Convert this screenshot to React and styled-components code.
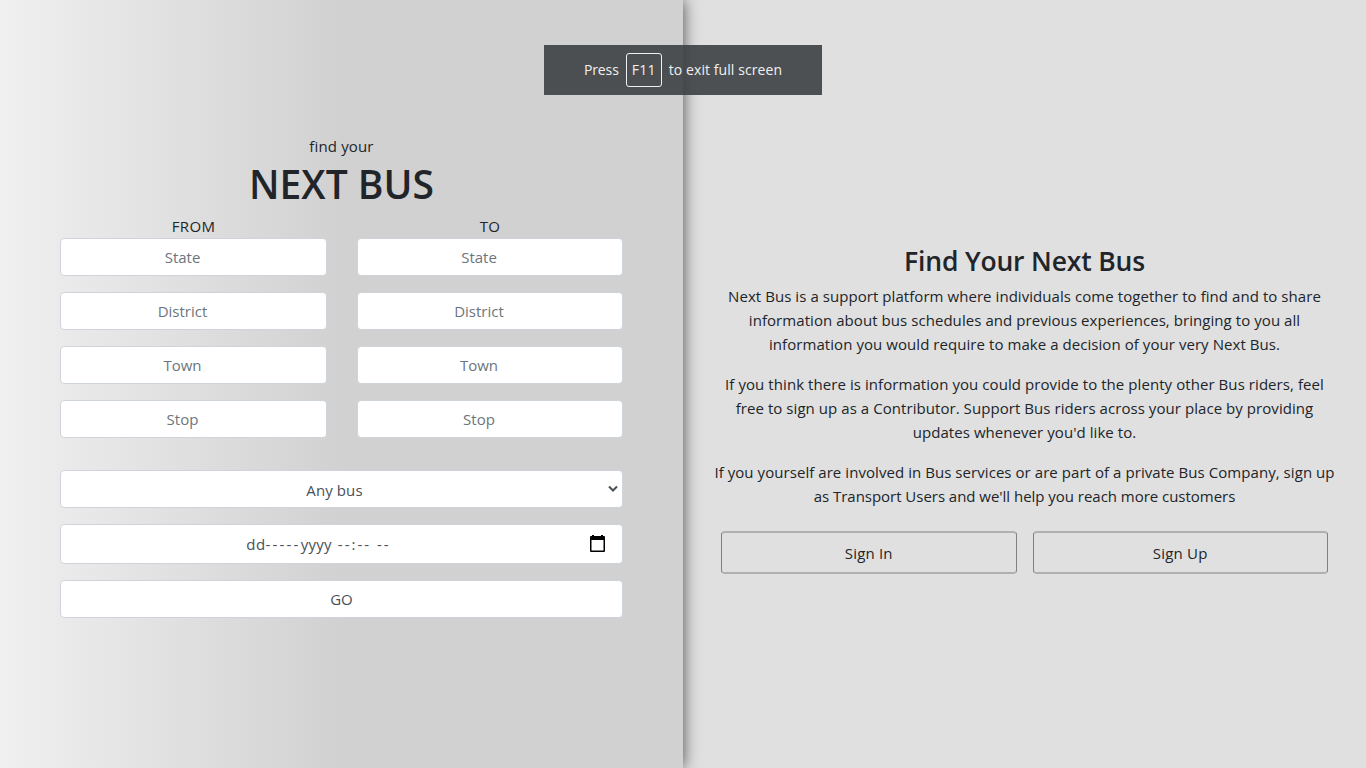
import React from "react";
import styled, { createGlobalStyle } from "styled-components";

const GlobalStyle = createGlobalStyle`
  *, *::before, *::after { box-sizing: border-box; }
  body {
    margin: 0;
    overflow: hidden;
    font-family: "Open Sans", "Noto Sans", sans-serif;
    font-size: 15px;
    line-height: 24px;
    color: #212529;
  }
`;

const Page = styled.main`
  display: flex;
  width: 1366px;
  height: 768px;
`;

const SearchPanel = styled.section`
  position: relative;
  z-index: 1;
  width: 683px;
  padding: 134px 60px 0 60px;
  background: linear-gradient(to right, #f0f0f0, #d1d1d1 50%);
  box-shadow: 0 0 15px rgba(0, 0, 0, 0.68);
`;

const InfoPanel = styled.section`
  flex: 1;
  display: flex;
  flex-direction: column;
  padding: 244px 30px 0;
  background: #e0e0e0;
  text-align: center;
`;

const Text = styled.span`
  letter-spacing: ${(p) => p.$ls || 0}px;
  white-space: nowrap;
`;

const Kicker = styled.div`
  text-align: center;
`;

const Title = styled.h1`
  margin: 0 0 6px;
  padding-top: 2px;
  font-size: 39px;
  font-weight: 600;
  line-height: 48px;
  text-align: center;
`;

const Columns = styled.div`
  display: grid;
  grid-template-columns: 267px 266px;
  column-gap: 30px;
`;

const Column = styled.div`
  display: flex;
  flex-direction: column;
  gap: 16px;
`;

const ColumnLabel = styled.div`
  height: 24px;
  margin-bottom: -16px;
  text-align: center;
  letter-spacing: 0.3px;
`;

const Control = styled.div`
  display: flex;
  align-items: center;
  justify-content: center;
  height: ${(p) => p.$h || 38}px;
  padding-right: ${(p) => p.$inset || 0}px;
  border: 1px solid #ced4da;
  border-radius: 4px;
  background: #fff;
  color: ${(p) => (p.$placeholder ? "#6c757d" : "#495057")};
`;

const Options = styled.div`
  display: flex;
  flex-direction: column;
  gap: 16px;
  margin-top: 32px;
`;

const IconControl = styled(Control)`
  padding: 0 ${(p) => p.$right}px 0 ${(p) => p.$left}px;

  svg { flex: none; }
`;

const Grow = styled.div`
  flex: 1;
  padding-top: ${(p) => p.$top || 0}px;
  padding-right: ${(p) => p.$end || 0}px;
  text-align: center;
`;

const InfoTitle = styled.h2`
  margin: 0 0 6px;
  font-size: 26.5px;
  font-weight: 600;
  line-height: 34px;
`;

const Paragraph = styled.p`
  display: flex;
  flex-direction: column;
  align-items: center;
  margin: 0 0 16px;
`;

const Actions = styled.div`
  display: flex;
  gap: 16px;
  margin-top: 7px;
  padding: 0 8px;
`;

const ActionButton = styled.button`
  flex: 1;
  height: 43px;
  padding: 0;
  border-style: solid;
  border-width: 2px 1px;
  border-color: #b0b0b0 #808080;
  border-radius: 4px;
  background: transparent;
  color: #212529;
  font: inherit;
  letter-spacing: 0.2px;
`;

const Toast = styled.div`
  position: absolute;
  z-index: 2;
  top: 45px;
  left: 544px;
  display: flex;
  align-items: center;
  justify-content: center;
  width: 278px;
  height: 50px;
  background: rgba(60, 64, 68, 0.9);
  color: #f0f0f0;
  font-size: 14px;
`;

const Key = styled.kbd`
  display: flex;
  align-items: center;
  justify-content: center;
  width: 36px;
  height: 34px;
  margin: 0 7px;
  border: 1px solid #f0f0f0;
  border-radius: 3px;
  font: inherit;
  letter-spacing: 0.3px;
`;

const FIELDS = ["State", "District", "Town", "Stop"];

const PARAGRAPHS = [
  [
    ["Next Bus is a support platform where individuals come together to find and to share", 0.06],
    ["information about bus schedules and previous experiences, bringing to you all", 0.06],
    ["information you would require to make a decision of your very Next Bus.", 0.06],
  ],
  [
    ["If you think there is information you could provide to the plenty other Bus riders, feel", 0.07],
    ["free to sign up as a Contributor. Support Bus riders across your place by providing", 0.06],
    ["updates whenever you'd like to.", 0.06],
  ],
  [
    ["If you yourself are involved in Bus services or are part of a private Bus Company, sign up", 0.06],
    ["as Transport Users and we'll help you reach more customers", -0.03],
  ],
];

function Place({ label }) {
  return (
    <Column>
      <ColumnLabel>{label}</ColumnLabel>
      {FIELDS.map((name) => (
        <Control key={name} $placeholder $inset={22}>
          <Text>{name}</Text>
        </Control>
      ))}
    </Column>
  );
}

function Chevron() {
  return (
    <svg width="10" height="8" viewBox="0 0 10 8" fill="none">
      <path d="M1 1.5 L5 5.5 L9 1.5" stroke="#495057" strokeWidth="2" />
    </svg>
  );
}

function Calendar() {
  return (
    <svg width="15" height="18" viewBox="0 0 15 18">
      <path
        fill="#000"
        fillRule="evenodd"
        d="M2 0h2v1h7V0h2v1h1q1 0 1 1v14q0 1-1 1H1q-1 0-1-1V2q0-1 1-1h1zM1.5 5v10.5h12V5z"
      />
    </svg>
  );
}

export default function App() {
  return (
    <Page>
      <GlobalStyle />
      <SearchPanel>
        <Kicker><Text $ls={0.15}>find your</Text></Kicker>
        <Title><Text>NEXT BUS</Text></Title>
        <Columns>
          <Place label="FROM" />
          <Place label="TO" />
        </Columns>
        <Options>
          <IconControl $left={0} $right={4}>
            <Grow $top={2}><Text $ls={0.1}>Any bus</Text></Grow>
            <Chevron />
          </IconControl>
          <IconControl $h={40} $left={0} $right={17}>
            <Grow $end={14}>
              <Text $ls={0.4}>dd</Text>
              <Text $ls={2.2}>-----</Text>
              <Text $ls={0.3}>yyyy</Text>
              <Text $ls={2}> --:-- --</Text>
            </Grow>
            <Calendar />
          </IconControl>
          <Control><Text>GO</Text></Control>
        </Options>
      </SearchPanel>
      <InfoPanel>
        <InfoTitle><Text $ls={-0.17}>Find Your Next Bus</Text></InfoTitle>
        {PARAGRAPHS.map((lines) => (
          <Paragraph key={lines[0][0]}>
            {lines.map(([line, spacing]) => (
              <Text key={line} $ls={spacing}>{line}</Text>
            ))}
          </Paragraph>
        ))}
        <Actions>
          <ActionButton>Sign In</ActionButton>
          <ActionButton>Sign Up</ActionButton>
        </Actions>
      </InfoPanel>
      <Toast>
        <Text $ls={-0.1}>Press</Text>
        <Key>F11</Key>
        <Text $ls={0.08}>to exit full screen</Text>
      </Toast>
    </Page>
  );
}
